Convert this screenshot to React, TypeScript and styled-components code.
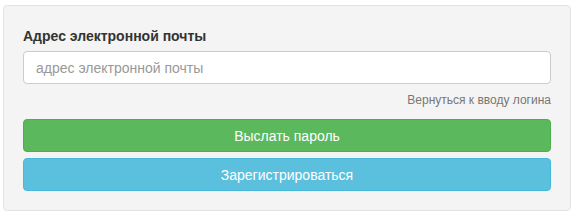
import React from "react"
import styled, { createGlobalStyle } from "styled-components"

const GlobalStyle = createGlobalStyle`
    body {
        margin: 0;
        padding: 5px 5px 0 3px;
        font-family: "Liberation Sans", Arial, Helvetica, sans-serif;
        background: #fff;
    }
`

const Panel = styled.div`
    width: 568px;
    box-sizing: border-box;
    background: #f4f4f4;
    border: 1px solid #e3e3e3;
    border-radius: 4px;
    padding: 20px 19px 19px 19px;
    display: flex;
    flex-direction: column;
`

const Label = styled.label`
    display: block;
    font-size: 14px;
    line-height: 20px;
    font-weight: 700;
    color: #333;
    margin-bottom: 5px;
`

const Input = styled.input`
    height: 33px;
    box-sizing: border-box;
    width: 100%;
    border: 1px solid #ccc;
    border-radius: 4px;
    background: #fff;
    padding: 6px 12px;
    font-family: inherit;
    font-size: 14px;
    color: #555;
    outline: none;

    &::placeholder {
        color: #999;
    }
`

const LinkRow = styled.div`
    display: flex;
    justify-content: flex-end;
    margin: 8px 0 10px;
`

const BackLink = styled.a`
    font-size: 12px;
    line-height: 17px;
    color: #777;
    text-decoration: none;
    cursor: pointer;
`

const Button = styled.button<{ $color: string; $border: string }>`
    height: 33px;
    width: 100%;
    border: 1px solid ${p => p.$border};
    border-radius: 4px;
    background: ${p => p.$color};
    color: #fff;
    font-family: inherit;
    font-size: 14px;
    cursor: pointer;

    & + & {
        margin-top: 6px;
    }
`

export default function App() {
    return (
        <>
            <GlobalStyle />
            <Panel>
                <Label>Адрес электронной почты</Label>
                <Input placeholder="адрес электронной почты" />
                <LinkRow>
                    <BackLink>Вернуться к вводу логина</BackLink>
                </LinkRow>
                <Button $color="#5cb85c" $border="#4cae4c">Выслать пароль</Button>
                <Button $color="#5bc0de" $border="#46b8da">Зарегистрироваться</Button>
            </Panel>
        </>
    )
}
